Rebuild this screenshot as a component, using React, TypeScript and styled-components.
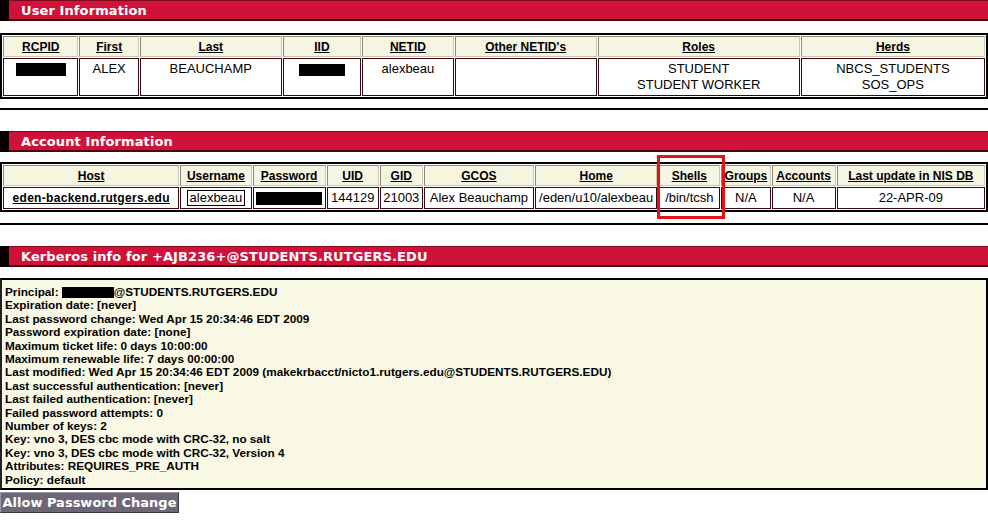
import React from "react";
import styled, { createGlobalStyle } from "styled-components";

const Global = createGlobalStyle`
  html, body { margin: 0; padding: 0; background: #fff; }
  body { font-family: "Liberation Sans", Arial, sans-serif; color: #000; width: 988px; }
`;

const Page = styled.div`
  position: relative;
  width: 988px;
  display: flex;
  flex-direction: column;
`;

const SectionBar = styled.div<{ $mt?: number }>`
  display: flex;
  height: 21px;
  margin-top: ${(p) => p.$mt ?? 0}px;
`;

const BarStub = styled.div`
  width: 9px;
  background: #0a0000;
`;

const BarBody = styled.div`
  flex: 1;
  background: #d0123a;
  border-top: 1px solid #7a0a1c;
  border-bottom: 2px solid #4a0610;
  display: flex;
  align-items: center;
  padding-left: 12px;
  color: #fff;
  font-family: "DejaVu Sans", Verdana, sans-serif;
  font-weight: bold;
  font-size: 13px;
  letter-spacing: 0.1px;
`;

const Table = styled.table<{ $mt: number }>`
  margin-top: ${(p) => p.$mt}px;
  width: 988px;
  table-layout: fixed;
  border-collapse: separate;
  border-spacing: 1px;
  border: 2px solid #000;
  font-family: "Liberation Sans", Arial, sans-serif;
`;

const Th = styled.th<{ $w: number }>`
  width: ${(p) => p.$w}px;
  box-sizing: border-box;
  background: #f6f5e2;
  border: 1px solid #8c8a78;
  border-right-color: #c9c7b4;
  border-bottom-color: #c9c7b4;
  font-size: 12px;
  font-weight: bold;
  text-decoration: underline;
  padding: 3px 1px 2px;
  white-space: nowrap;
  text-align: center;
`;

const Td = styled.td`
  box-sizing: border-box;
  background: #fff;
  border: 1px solid #3a0812;
  font-size: 13px;
  text-align: center;
  vertical-align: top;
  white-space: nowrap;
  padding: 2px 1px 2px;
  line-height: 16px;
  overflow: hidden;
`;

const HostLink = styled.span`
  font-weight: bold;
  text-decoration: underline;
  font-size: 12px;
  letter-spacing: 0.3px;
`;

const Redact = styled.span<{ $w: number; $h?: number }>`
  display: inline-block;
  width: ${(p) => p.$w}px;
  height: ${(p) => p.$h ?? 13}px;
  background: #000;
  vertical-align: middle;
`;

const BoxedValue = styled.span`
  display: inline-block;
  border: 1px solid #000;
  padding: 0 2px;
  line-height: 14px;
`;

const Rule = styled.div<{ $mt: number }>`
  margin-top: ${(p) => p.$mt}px;
  height: 2px;
  background: #000;
`;

const KerbBox = styled.div`
  margin-top: 11px;
  background: #f8f8e4;
  border: 2px solid #000;
  border-left-color: #222;
  padding: 5px 3px 5px;
  height: 212px;
  box-sizing: border-box;
  font-family: "Liberation Sans", Arial, sans-serif;
  font-weight: bold;
  font-size: 11.75px;
  line-height: 13.4px;
`;

const KerbLine = styled.div`
  white-space: nowrap;
`;

const ActionButton = styled.button`
  align-self: flex-start;
  margin-top: 2px;
  height: 21px;
  width: 179px;
  background: #6c6677;
  color: #fff;
  font-family: "DejaVu Sans", Verdana, sans-serif;
  font-weight: bold;
  font-size: 13px;
  border: 1px solid #9a96a2;
  border-right-color: #3a3640;
  border-bottom-color: #3a3640;
  padding: 0;
  cursor: pointer;
`;

const Highlight = styled.div`
  position: absolute;
  left: 657px;
  top: 155px;
  width: 68px;
  height: 64px;
  box-sizing: border-box;
  border: 3px solid #e01414;
  pointer-events: none;
`;

const userCols: [string, number][] = [
  ["RCPID", 75],
  ["First", 59],
  ["Last", 141],
  ["IID", 78],
  ["NETID", 91],
  ["Other NETID's", 141],
  ["Roles", 201],
  ["Herds", 183],
];

const acctCols: [string, number][] = [
  ["Host", 176],
  ["Username", 71],
  ["Password", 73],
  ["UID", 52],
  ["GID", 43],
  ["GCOS", 110],
  ["Home", 122],
  ["Shells", 62],
  ["Groups", 49],
  ["Accounts", 64],
  ["Last update in NIS DB", 148],
];

const kerbLines: React.ReactNode[] = [
  <>Principal: <Redact $w={52} $h={11} />@STUDENTS.RUTGERS.EDU</>,
  "Expiration date: [never]",
  "Last password change: Wed Apr 15 20:34:46 EDT 2009",
  "Password expiration date: [none]",
  "Maximum ticket life: 0 days 10:00:00",
  "Maximum renewable life: 7 days 00:00:00",
  "Last modified: Wed Apr 15 20:34:46 EDT 2009 (makekrbacct/nicto1.rutgers.edu@STUDENTS.RUTGERS.EDU)",
  "Last successful authentication: [never]",
  "Last failed authentication: [never]",
  "Failed password attempts: 0",
  "Number of keys: 2",
  "Key: vno 3, DES cbc mode with CRC-32, no salt",
  "Key: vno 3, DES cbc mode with CRC-32, Version 4",
  "Attributes: REQUIRES_PRE_AUTH",
  "Policy: default",
];

function Section({ title, mt }: { title: string; mt?: number }) {
  return (
    <SectionBar $mt={mt}>
      <BarStub />
      <BarBody>{title}</BarBody>
    </SectionBar>
  );
}

export default function App() {
  return (
    <Page>
      <Global />
      <Section title="User Information" />
      <Table $mt={12}>
        <thead>
          <tr>
            {userCols.map(([n, w]) => (
              <Th key={n} $w={w}>{n}</Th>
            ))}
          </tr>
        </thead>
        <tbody>
          <tr>
            <Td><Redact $w={50} /></Td>
            <Td>ALEX</Td>
            <Td>BEAUCHAMP</Td>
            <Td><Redact $w={46} $h={12} /></Td>
            <Td>alexbeau</Td>
            <Td></Td>
            <Td>STUDENT<br />STUDENT WORKER</Td>
            <Td>NBCS_STUDENTS<br />SOS_OPS</Td>
          </tr>
        </tbody>
      </Table>
      <Rule $mt={9} />
      <Section title="Account Information" mt={21} />
      <Table $mt={10}>
        <thead>
          <tr>
            {acctCols.map(([n, w]) => (
              <Th key={n} $w={w}>{n}</Th>
            ))}
          </tr>
        </thead>
        <tbody>
          <tr>
            <Td><HostLink>eden-backend.rutgers.edu</HostLink></Td>
            <Td><BoxedValue>alexbeau</BoxedValue></Td>
            <Td><Redact $w={66} /></Td>
            <Td>144129</Td>
            <Td>21003</Td>
            <Td>Alex Beauchamp</Td>
            <Td>/eden/u10/alexbeau</Td>
            <Td>/bin/tcsh</Td>
            <Td>N/A</Td>
            <Td>N/A</Td>
            <Td>22-APR-09</Td>
          </tr>
        </tbody>
      </Table>
      <Rule $mt={11} />
      <Section title="Kerberos info for +AJB236+@STUDENTS.RUTGERS.EDU" mt={21} />
      <KerbBox>
        {kerbLines.map((l, i) => (
          <KerbLine key={i}>{l}</KerbLine>
        ))}
      </KerbBox>
      <ActionButton>Allow Password Change</ActionButton>
      <Highlight />
    </Page>
  );
}
